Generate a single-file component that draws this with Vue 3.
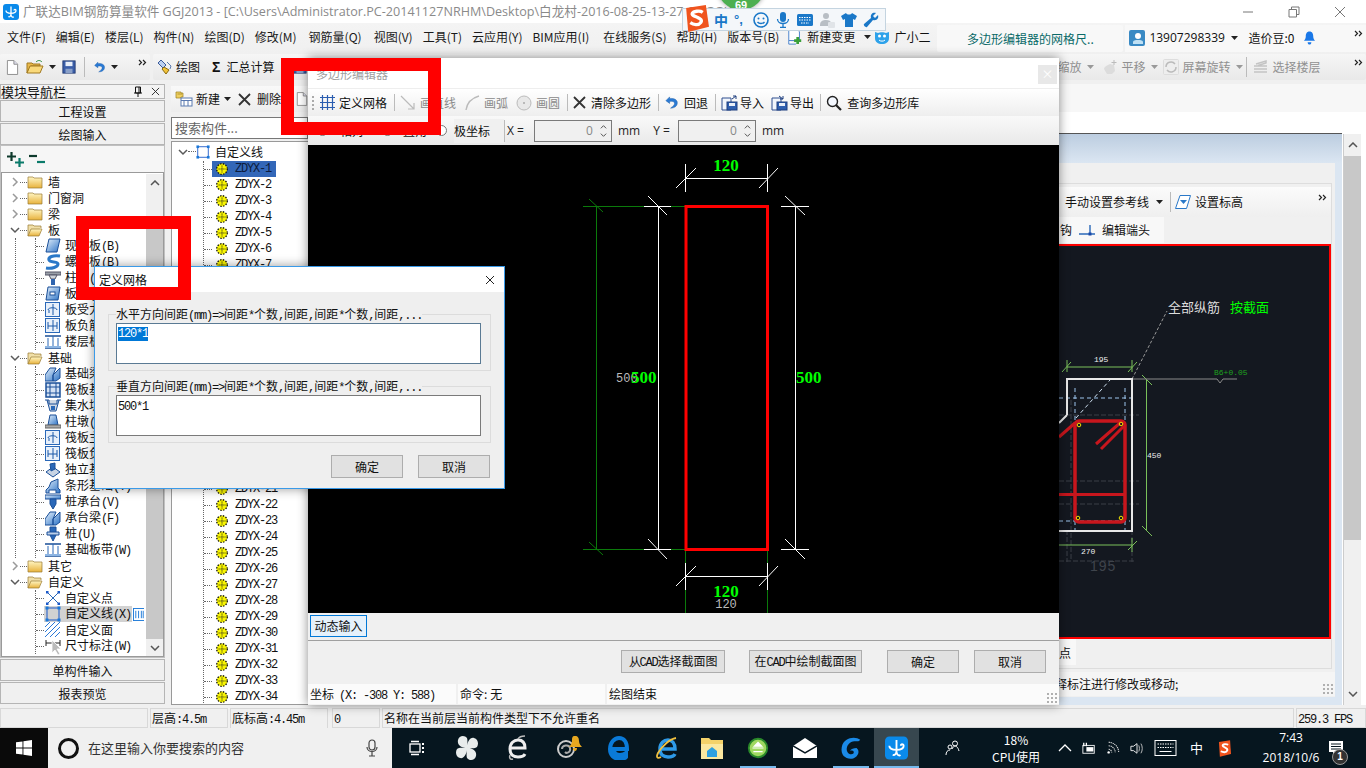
<script setup>
const menus = ['文件(F)','编辑(E)','楼层(L)','构件(N)','绘图(D)','修改(M)','钢筋量(Q)','视图(V)','工具(T)','云应用(Y)','BIM应用(I)','在线服务(S)','帮助(H)','版本号(B)']
const K = (t, i, sel) => ({ t, i, sel })
const leftTree = [
  { t: '墙' }, { t: '门窗洞' }, { t: '梁' },
  { t: '板', open: true, kids: [K('现浇板(B)','slab'),K('螺旋板(B)','spiral'),K('柱帽(V)','cap'),K('板洞(N)','board'),K('板受力筋(S)','bar1'),K('板负筋(F)','bar2'),K('楼层板带(H)','band')] },
  { t: '基础', open: true, kids: [K('基础梁(F)','fbeam'),K('筏板基础(M)','raft'),K('集水坑(K)','pit'),K('柱墩(Y)','pier'),K('筏板主筋(R)','bar1'),K('筏板负筋(X)','bar2'),K('独立基础(P)','iso'),K('条形基础(T)','strip'),K('桩承台(V)','pilecap'),K('承台梁(F)','fbeam'),K('桩(U)','pile'),K('基础板带(W)','band')] },
  { t: '其它' },
  { t: '自定义', open: true, last: true, kids: [K('自定义点','xpt'),K('自定义线(X)','square',true),K('自定义面','hatch'),K('尺寸标注(W)','dim')] }
]
const zdyx = Array.from({ length: 34 }, (_, i) => 'ZDYX-' + (i + 1))
const segs = (s) => (s.match(/[\x20-\x7e]+|[^\x20-\x7e]+/g) || []).map((t) => ({ t, a: /^[\x20-\x7e]/.test(t) }))
const gridLegendH = '水平方向间距(mm)=>间距*个数,间距,间距*个数,间距,...'
const gridLegendV = '垂直方向间距(mm)=>间距*个数,间距,间距*个数,间距,...'
const sogou = ['sg-smile','sg-mic','sg-kbd','sg-user','sg-shirt','sg-wrench']
const taskIcons = [
  { i: 'tk-view', w: 49 }, { i: 'tk-fan', w: 51 }, { i: 'tk-e', w: 51 }, { i: 'tk-swirl', w: 51 },
  { i: 'tk-edge', w: 50 }, { i: 'tk-ie', w: 45 }, { i: 'tk-folder', w: 46 },
  { i: 'tk-green', w: 46, u: 1 }, { i: 'tk-mail', w: 47 }, { i: 'tk-g', w: 46, u: 1 }, { i: 'glodon', w: 45, u: 1, on: 1 }
]
const trayIcons = ['tr-caret','tr-batt','tr-wifi','tr-spk','tr-kbd']
</script>

<template>
  <div class="screen">
    <!-- icon sprite -->
    <svg class="sprite" width="0" height="0">
      <defs>
        <linearGradient id="gFolder" x1="0" y1="0" x2="0" y2="1"><stop offset="0" stop-color="#fff6c4"/><stop offset="1" stop-color="#e8b23c"/></linearGradient>
        <linearGradient id="gBlue" x1="0" y1="0" x2="1" y2="1"><stop offset="0" stop-color="#e4f0fb"/><stop offset="1" stop-color="#2f74c6"/></linearGradient>
      </defs>
      <symbol id="glodon" viewBox="0 0 16 16"><rect width="16" height="16" rx="3" fill="#0a8aea"/><path d="M8 2.500V10c0 2-1.500 3.500-2.600 2.600M3 6.500c0 2 2 2.800 5 2.800s5-.8 5-2.800c0-1.500-2-1.500-2 0M8 10.500c0 2 1.500 3.300 2.800 2.300" fill="none" stroke="#fff" stroke-width="1.300"/></symbol>
      <symbol id="doc" viewBox="0 0 14 16"><path d="M1.500 .5h7l4 4v11h-11z" fill="#fff" stroke="#8a8a8a"/><path d="M8.500 .5v4h4" fill="#dde" stroke="#8a8a8a"/></symbol>
      <symbol id="open-tb" viewBox="0 0 18 16"><path d="M1 14V4h5l1 1h7v2H5z" fill="#e8b84a" stroke="#a07820"/><path d="M1 14l3-7h13l-3 7z" fill="#f9d97a" stroke="#a07820"/><path d="M10 3c2-2 4-2 6 0" fill="none" stroke="#2b8a3e"/></symbol>
      <symbol id="save" viewBox="0 0 16 16"><rect x="1" y="1" width="14" height="14" fill="#3b5ea8" stroke="#223a70"/><rect x="4" y="2" width="8" height="5" fill="#e8eef8"/><rect x="4" y="10" width="8" height="5" fill="#8aa0c8"/></symbol>
      <symbol id="undo" viewBox="0 0 16 16"><path d="M6 2L2 6l4 3V7c4-1 6 1 5 3s-3 3-4 4c5 0 8-3 7-7-1-3-5-4-8-3z" fill="#2a7ad4" stroke="#1a5ca8" stroke-width=".5"/></symbol>
      <symbol id="brush" viewBox="0 0 16 16"><path d="M1 4l3-3 5 5-3 3z" fill="#bcd0f0" stroke="#3a5a9a"/><path d="M7 8l5 3-3 4-4-5z" fill="#f2c33a" stroke="#8a6a10"/><path d="M10 3l4 4-1 3" fill="none" stroke="#5a7ab0"/></symbol>
      <symbol id="pin" viewBox="0 0 10 12"><path d="M2.500 1h5v6h-5zM6 1v6M1 7h8M5 7v4" fill="none" stroke="#111"/></symbol>
      <symbol id="close-thin" viewBox="0 0 10 10"><path d="M1 1l8 8M9 1l-8 8" stroke="#222" fill="none"/></symbol>
      <symbol id="newc" viewBox="0 0 18 16"><path d="M1 1h5v1h2v4H6v1H1z M2.500 3H7" fill="#f0d060" stroke="#9a8020" stroke-width=".7"/><rect x="6" y="7" width="11" height="8" fill="#fff" stroke="#5a7ab0"/><path d="M6 9.500h11M9 9.500V15M13 9.500V15" stroke="#5a7ab0" fill="none"/></symbol>
      <symbol id="x-big" viewBox="0 0 13 13"><path d="M1 1l11 11M12 1L1 12" stroke="#333" stroke-width="1.800" fill="none"/></symbol>
      <symbol id="plusplus" viewBox="0 0 17 15"><path d="M4.500 0v9M0 4.500h9" stroke="#0e3a2c" stroke-width="2.200" fill="none"/><path d="M12.500 6v9M8 10.500h9" stroke="#0a7a6a" stroke-width="2.200" fill="none"/></symbol>
      <symbol id="minusminus" viewBox="0 0 16 15"><path d="M0 4h8" stroke="#0e3a2c" stroke-width="2.200"/><path d="M8 10h8" stroke="#0a7a6a" stroke-width="2.200"/></symbol>
      <symbol id="chev-r" viewBox="0 0 10 10"><path d="M3 1l4 4-4 4" fill="none" stroke="#9a9a9a" stroke-width="1.500"/></symbol>
      <symbol id="chev-d" viewBox="0 0 10 10"><path d="M1 3l4 4 4-4" fill="none" stroke="#5a5a5a" stroke-width="1.500"/></symbol>
      <symbol id="folder" viewBox="0 0 16 14"><path d="M1 2h5l1 1h8v10H1z" fill="url(#gFolder)" stroke="#9a7a30" stroke-width=".7"/></symbol>
      <symbol id="folder-open" viewBox="0 0 16 14"><path d="M1 13V2h5l1 1h7v2" fill="#f0dfa8" stroke="#9a7a30" stroke-width=".7"/><path d="M1 13l3-7h11l-3 7z" fill="url(#gFolder)" stroke="#9a7a30" stroke-width=".7"/></symbol>
      <symbol id="slab" viewBox="0 0 16 16"><path d="M4 1h11l-3 13H1z" fill="url(#gBlue)" stroke="#1a4f98"/></symbol>
      <symbol id="spiral" viewBox="0 0 16 16"><path d="M15 2C8 1 3 3 4 6s9 1 9 4-6 5-12 4" fill="none" stroke="#2a78c8" stroke-width="3"/></symbol>
      <symbol id="cap" viewBox="0 0 16 16"><path d="M0 2h16v3H0z" fill="#9aa0a8" stroke="#556"/><path d="M4 5h8l-2 4H6z" fill="#cfd4da" stroke="#556"/><path d="M6 9h4v6H6z" fill="#2f64ae"/></symbol>
      <symbol id="board" viewBox="0 0 16 16"><path d="M3 1h12l-2 13H1z" fill="url(#gBlue)" stroke="#1a4f98"/><rect x="5" y="6" width="5" height="3" fill="#fff" stroke="#1a4f98"/></symbol>
      <symbol id="bar1" viewBox="0 0 16 16"><rect x=".5" y=".5" width="14" height="14" fill="#e8f0fa" stroke="#2a68b8"/><path d="M8 2v11M3 8c0-3 9-3 9 0M4 8v3" fill="none" stroke="#1a58a8"/></symbol>
      <symbol id="bar2" viewBox="0 0 16 16"><rect x=".5" y=".5" width="14" height="14" fill="#e8f0fa" stroke="#2a68b8"/><path d="M8 2v11M3 4v4h9V4M3 8v3M12 8v3" fill="none" stroke="#1a58a8"/></symbol>
      <symbol id="band" viewBox="0 0 16 16"><path d="M0 2h16M0 14h16" stroke="#1a4f98" stroke-width="1.500"/><path d="M3 4v9M8 2v12M13 4v9" stroke="#2a68b8" fill="none"/><rect y="12" width="16" height="2" fill="#8cb4e2"/></symbol>
      <symbol id="fbeam" viewBox="0 0 16 16"><path d="M0 15V9l5-7h6L8 9v6zM8 15V9l7-7v10l-4 3z" fill="url(#gBlue)" stroke="#1a4f98"/></symbol>
      <symbol id="raft" viewBox="0 0 16 16"><rect x="1" y="1" width="14" height="14" fill="#d4e2f4" stroke="#1a4f98" stroke-width="1.500"/><path d="M1 5h14M1 11h14M5 1v14M11 1v14" stroke="#1a4f98" fill="none"/></symbol>
      <symbol id="pit" viewBox="0 0 16 16"><path d="M0 2h4v4h8V2h4M2 2l3 11h6l3-11" fill="#cfd8e4" stroke="#1a4f98"/><path d="M6 8h4v4H6z" fill="#2a68b8"/></symbol>
      <symbol id="pier" viewBox="0 0 16 16"><path d="M5 1h6l2 10H3z" fill="url(#gBlue)" stroke="#1a4f98"/><rect y="11" width="16" height="3" fill="#aaa" stroke="#666"/></symbol>
      <symbol id="iso" viewBox="0 0 16 16"><path d="M1 10l7-5 7 5-7 5z" fill="#c8d4e4" stroke="#1a4f98"/><path d="M5 2l5-1v6L6 9z" fill="#2a68b8" stroke="#1a4f98"/></symbol>
      <symbol id="strip" viewBox="0 0 16 16"><path d="M1 15v-3l3-3 2-5 7-3v9l2 2v3z" fill="url(#gBlue)" stroke="#1a4f98"/><path d="M4 15v-3h7v3" fill="#fff" stroke="#1a4f98"/></symbol>
      <symbol id="pilecap" viewBox="0 0 16 16"><path d="M0 1h16v4H0z" fill="url(#gBlue)" stroke="#1a4f98"/><path d="M5 5h6v5l-3 5-3-5z" fill="#2a68b8" stroke="#1a4f98"/></symbol>
      <symbol id="pile" viewBox="0 0 16 16"><path d="M5 1h6v8l-3 6-3-6z" fill="#2a68b8" stroke="#1a4f98"/><path d="M2 6h12v3H2z" fill="#bcd0ea" stroke="#1a4f98"/></symbol>
      <symbol id="xpt" viewBox="0 0 16 16"><path d="M3 3l10 10M13 3L3 13" stroke="#2a68b8" fill="none"/><rect x="1" y="1" width="2.500" height="2.500" fill="#1a58c8"/><rect x="12.500" y="1" width="2.500" height="2.500" fill="#1a58c8"/><rect x="1" y="12.500" width="2.500" height="2.500" fill="#1a58c8"/><rect x="12.500" y="12.500" width="2.500" height="2.500" fill="#1a58c8"/></symbol>
      <symbol id="square" viewBox="0 0 16 16"><rect x="2" y="2" width="12" height="12" fill="none" stroke="#1a58c8"/><rect x=".5" y=".5" width="3" height="3" fill="#1a78d8"/><rect x="12.500" y=".5" width="3" height="3" fill="#1a78d8"/><rect x=".5" y="12.500" width="3" height="3" fill="#1a78d8"/><rect x="12.500" y="12.500" width="3" height="3" fill="#1a78d8"/></symbol>
      <symbol id="hatch" viewBox="0 0 16 16"><path d="M0 5l5-5M0 10L10 0M0 15L15 0M5 15L15 5M10 15l5-5" stroke="#2a78d8" fill="none"/></symbol>
      <symbol id="dim" viewBox="0 0 16 16"><path d="M1 2v6M15 2v6M1 5h14" stroke="#222" fill="none"/></symbol>
      <symbol id="cols" viewBox="0 0 14 14"><rect x=".5" y=".5" width="13" height="13" fill="#fff" stroke="#1a78d8"/><path d="M3 3v8M6 3v8M9 3v8M11 3v8" stroke="#1a78d8" fill="none"/></symbol>
      <symbol id="gear" viewBox="0 0 12 12"><circle cx="6" cy="6" r="5.400" fill="#f8f400"/><circle cx="6" cy="6" r="5.300" fill="none" stroke="#111" stroke-width="1.300" stroke-dasharray="1.400 1.400"/><path d="M2.500 6h7M6 2.500v7" stroke="#222" stroke-width=".9" stroke-dasharray="1.200 .8"/></symbol>
      <symbol id="grid" viewBox="0 0 15 15"><path d="M0 2.500h15M0 7.500h15M0 12.500h15M2.500 0v15M7.500 0v15M12.500 0v15" stroke="#2a5db0" fill="none" stroke-width="1.200"/></symbol>
      <symbol id="line-d" viewBox="0 0 16 16"><path d="M1 1l13 13M8 14h6V8" stroke="#bbb" stroke-width="1.200" fill="none"/></symbol>
      <symbol id="arc" viewBox="0 0 16 16"><path d="M2 15C3 8 8 3 15 1" fill="none" stroke="#bbb" stroke-width="1.400"/></symbol>
      <symbol id="circ" viewBox="0 0 16 16"><circle cx="8" cy="8" r="7" fill="#e8e8e8" stroke="#bbb"/><circle cx="8" cy="8" r="1" fill="#aaa"/></symbol>
      <symbol id="imp" viewBox="0 0 18 16"><path d="M1 3h9v12H1z" fill="#f2f6fc" stroke="#2f4f8f"/><rect x="6" y="7" width="10" height="8" fill="#2f5faf" stroke="#1f3f7f"/><rect x="8" y="8" width="6" height="3" fill="#e8eef8"/><path d="M15 1l-4 3M12 1h3v3" stroke="#1f3f7f" fill="none"/></symbol>
      <symbol id="exp" viewBox="0 0 18 16"><path d="M1 3h9v12H1z" fill="#f2f6fc" stroke="#2f4f8f"/><rect x="6" y="7" width="10" height="8" fill="#2f5faf" stroke="#1f3f7f"/><rect x="8" y="8" width="6" height="3" fill="#e8eef8"/><path d="M8 1l4 3M12 1v3H9" stroke="#1f3f7f" fill="none"/></symbol>
      <symbol id="mag" viewBox="0 0 16 16"><circle cx="6.500" cy="6.500" r="5" fill="#f4f8ff" stroke="#222" stroke-width="1.400"/><path d="M10 10l5 5" stroke="#222" stroke-width="2.200"/></symbol>
      <symbol id="doc-plus" viewBox="0 0 18 20"><path d="M2 1h9l3 3v10H2z M2 14v4h8" fill="#fff" stroke="#3a78c8"/><path d="M12 10v8M8 14h8" stroke="#3aa03a" stroke-width="3"/></symbol>
      <symbol id="monster" viewBox="0 0 16 16"><path d="M1 3l3 1c2-1 6-1 8 0l3-1v6c0 4-3 6-7 6s-7-2-7-6z" fill="#2ea2ea"/><circle cx="5.500" cy="7" r="1.500" fill="#fff"/><circle cx="10.500" cy="7" r="1.500" fill="#fff"/><path d="M5 11c1 1.500 5 1.500 6 0" stroke="#fff" fill="none"/></symbol>
      <symbol id="user-tile" viewBox="0 0 16 16"><rect width="16" height="16" rx="2" fill="#3a8ac4"/><circle cx="9" cy="6" r="3" fill="#fff"/><path d="M4 14v-2c0-1.500 2-2 5-2s5 .5 5 2v2z" fill="#bfe0f4"/></symbol>
      <symbol id="bell" viewBox="0 0 14 16"><path d="M7 1c3 0 4 2.500 4 5s1 4 2 5H1c1-1 2-2.500 2-5s1-5 4-5zM5 12.500h4c0 1.500-1 2.500-2 2.500s-2-1-2-2.500z" fill="#1a78e8"/></symbol>
      <symbol id="hand" viewBox="0 0 16 16"><path d="M2 10c0-2 2-3 4-4l2-1 4 1 1 6-3 3H5z" fill="#dcdcdc"/><path d="M12 1v5M9.500 3.500h5" stroke="#bbb" fill="none"/></symbol>
      <symbol id="rot" viewBox="0 0 16 16"><rect x=".5" y=".5" width="15" height="15" rx="1" fill="#eee" stroke="#ddd"/><path d="M3 8a5 5 0 0 1 9-3M13 8a5 5 0 0 1-9 3" stroke="#bbb" fill="none" stroke-width="1.500"/></symbol>
      <symbol id="layers" viewBox="0 0 16 16"><path d="M3 5L13 2v2L5 6.500M1 7h13M1 10h13M1 13h13" stroke="#c4c4c4" stroke-width="1.500" fill="none"/></symbol>
      <symbol id="dimline" viewBox="0 0 16 16"><path d="M0 12h16M11 3v9" stroke="#2a68b8" stroke-width="1.400"/><rect x="9.500" y="10.500" width="3" height="3" fill="#1a48a8"/></symbol>
      <symbol id="elev" viewBox="0 0 16 16"><path d="M5 1.500h10.500l-4 13H.5z" fill="#fff" stroke="#2a78c8"/><path d="M5 6h7l-3.500 4z" fill="#2a78c8"/></symbol>
      <symbol id="caret" viewBox="0 0 7 4"><path d="M0 0h7L3.500 4z" fill="#222"/></symbol>
      <symbol id="caret-g" viewBox="0 0 7 4"><path d="M0 0h7L3.500 4z" fill="#999"/></symbol>
      <symbol id="chev2" viewBox="0 0 9 7"><path d="M1 1l2.500 2.500L1 6M5 1l2.500 2.500L5 6" fill="none" stroke="#222" stroke-width="1.200"/></symbol>
      <symbol id="arrow-up" viewBox="0 0 10 6"><path d="M1 5l4-4 4 4" fill="none" stroke="#555" stroke-width="1.500"/></symbol>
      <symbol id="arrow-down" viewBox="0 0 10 6"><path d="M1 1l4 4 4-4" fill="none" stroke="#555" stroke-width="1.500"/></symbol>
      <symbol id="sg-s" viewBox="0 0 25 26"><path d="M3 3l19-3 3 21-20 5z" fill="#f0541e"/><path d="M19 7c-3-2-9-1-10 1s3 3 5 4 5 2 3 5-7 2-10 0" fill="none" stroke="#fff" stroke-width="3.200"/></symbol>
      <symbol id="sg-smile" viewBox="0 0 16 16"><circle cx="8" cy="8" r="7" fill="none" stroke="#1a78c8" stroke-width="1.600"/><circle cx="5.500" cy="6.500" r="1" fill="#1a78c8"/><circle cx="10.500" cy="6.500" r="1" fill="#1a78c8"/><path d="M4.500 10c1.500 2 5.500 2 7 0" stroke="#1a78c8" fill="none" stroke-width="1.300"/></symbol>
      <symbol id="sg-mic" viewBox="0 0 16 16"><rect x="5" y="0" width="6" height="10" rx="3" fill="#1a78c8"/><path d="M2.500 7c0 6 11 6 11 0M8 12v4M5 15.500h6" stroke="#1a78c8" fill="none" stroke-width="1.300"/></symbol>
      <symbol id="sg-kbd" viewBox="0 0 16 16"><rect y="2" width="16" height="12" rx="1.500" fill="#1a78c8"/><path d="M2 5.500h12M2 8h12M4 11h8" stroke="#fff" stroke-dasharray="1.500 1" fill="none"/></symbol>
      <symbol id="sg-user" viewBox="0 0 16 16"><circle cx="7" cy="4" r="3" fill="#b8bec4"/><path d="M1 13c0-4 3-5 6-5s5 1 5 3v3H1z" fill="#b8bec4"/><rect x="9" y="10" width="7" height="6" rx="1" fill="#e0e4e8"/></symbol>
      <symbol id="sg-shirt" viewBox="0 0 16 16"><path d="M5 1L0 4l2 4 2-1v8h8V7l2 1 2-4-5-3c-1 2-5 2-6 0z" fill="#1a78c8"/></symbol>
      <symbol id="sg-wrench" viewBox="0 0 16 16"><path d="M15 3l-3 3-2-2 3-3c-3-1-6 1-5 5L1 12c-1 1 2 4 3 3l6-7c4 1 6-2 5-5z" fill="#1a78c8"/></symbol>
      <symbol id="win" viewBox="0 0 16 16"><path d="M0 2.300L6.500 1.400V7.500H0zM7.400 1.300L16 0V7.500H7.400zM0 8.400H6.500V14.600L0 13.700zM7.400 8.400H16V16L7.400 14.700z" fill="#fff"/></symbol>
      <symbol id="mic-d" viewBox="0 0 16 18"><rect x="5" y="1" width="6" height="10" rx="3" fill="none" stroke="#444" stroke-width="1.200"/><path d="M3 8c0 6 10 6 10 0M8 13v4M5 17h6" stroke="#444" fill="none" stroke-width="1.200"/></symbol>
      <symbol id="tk-view" viewBox="0 0 16 16"><rect x="1" y="4" width="10" height="8" fill="none" stroke="#fff" stroke-width="1.300"/><path d="M2 1.500h8M2 14.500h8" stroke="#fff" stroke-width="1.300"/><rect x="13" y="3" width="2" height="2" fill="#fff"/><rect x="13" y="7" width="2" height="2" fill="#fff"/><rect x="13" y="11" width="2" height="2" fill="#fff"/></symbol>
      <symbol id="tk-fan" viewBox="0 0 22 26"><path d="M11 13C5 13 1 10 2 5s7-5 9-2c1 3 0 7 0 10zM11 13c0-6 3-11 7-10s5 6 3 9c-2 2-7 1-10 1zM11 13c6 0 10 3 9 8s-7 5-9 2c-1-3 0-7 0-10zM11 13c0 6-3 11-7 10s-5-6-3-9c2-2 7-1 10-1z" fill="#e8ecec"/></symbol>
      <symbol id="tk-e" viewBox="0 0 22 26"><path d="M4 13h14c0-6-3-8-7-8s-8 3-8 9 4 8 8 8 6-1 7-3" fill="none" stroke="#eee" stroke-width="3"/><path d="M18 1c-3 0-6 1-7 3M3 20c-1 3 0 5 3 4" fill="none" stroke="#bbb" stroke-width="1.500"/></symbol>
      <symbol id="tk-swirl" viewBox="0 0 28 24"><circle cx="11" cy="13" r="8" fill="none" stroke="#ccc" stroke-width="2"/><path d="M7 13c0-4 7-5 8-1s-3 6-5 4" fill="none" stroke="#aaa" stroke-width="2"/><path d="M20 0c3 0 4 2 4 5s2 5 3 6H14c1-1 3-3 3-6s0-5 3-5zM18 12h4c0 2-1 3-2 3s-2-1-2-3z" fill="#e8a820"/></symbol>
      <symbol id="tk-edge" viewBox="0 0 22 24"><path d="M4 13h15c0-7-3-11-8-11S2 7 2 13s4 10 10 10c3 0 5-1 6-2v-4c-2 2-4 2-6 2-4 0-6-2-6-5" fill="none" stroke="#0a7ad8" stroke-width="4"/></symbol>
      <symbol id="tk-ie" viewBox="0 0 24 24"><path d="M6 13h14c0-6-3-9-7-9s-8 3-8 9 4 8 8 8 6-1 7-3" fill="none" stroke="#2e9ae8" stroke-width="3.500"/><path d="M21 2c-6 1-14 8-18 15-2 4-1 6 3 4" fill="none" stroke="#f0c040" stroke-width="1.800"/></symbol>
      <symbol id="tk-folder" viewBox="0 0 22 22"><path d="M0 1h8l2 2h12v19H0z" fill="#f4d26a"/><rect y="7" width="22" height="15" fill="#fbe8a0"/><path d="M6 14l5-4 5 4v6H6z" fill="#2ea0e0"/></symbol>
      <symbol id="tk-green" viewBox="0 0 24 26"><circle cx="12" cy="13" r="10" fill="#9fd860" stroke="#2a8a2a" stroke-width="2"/><path d="M6 13h12M7 17h10M12 7L8 11h8z" fill="#fff" stroke="#fff" stroke-width="1.300"/></symbol>
      <symbol id="tk-mail" viewBox="0 0 24 20"><path d="M0 8L12 0l12 8v12H0z" fill="#fff"/><path d="M0 8l12 7 12-7" fill="none" stroke="#06161f" stroke-width="1.500"/></symbol>
      <symbol id="tk-g" viewBox="0 0 24 26"><path d="M22 4C17 0 4 1 2 12s7 14 13 12c5-2 7-8 3-11-3 0-6 1-7 3 3-1 4 0 4 2s-5 3-7-1 1-10 6-11 6 1 8-2z" fill="#1a8ae8"/></symbol>
      <symbol id="tr-caret" viewBox="0 0 14 14"><path d="M1 10l6-6 6 6" fill="none" stroke="#fff" stroke-width="1.300"/></symbol>
      <symbol id="tr-batt" viewBox="0 0 16 16"><rect x="1" y="5" width="13" height="9" fill="none" stroke="#fff"/><rect x="5" y="7" width="8" height="5" fill="#fff"/><path d="M2 2v4M5 2v4" stroke="#fff" stroke-width="1.500"/></symbol>
      <symbol id="tr-wifi" viewBox="0 0 16 16"><path d="M3 1.500A11.500 11.500 0 0 1 14.500 13M3 5.500A7.500 7.500 0 0 1 10.500 13M3 9.500A3.500 3.500 0 0 1 6.500 13" fill="none" stroke="#ddd" stroke-dasharray="1.500 .8" stroke-width="1.200"/><circle cx="3" cy="13" r="1.400" fill="#fff"/></symbol>
      <symbol id="tr-spk" viewBox="0 0 16 16"><path d="M1 6h3l4-3v11l-4-3H1z" fill="none" stroke="#fff"/><path d="M10 5c1 2 1 5 0 7M12.500 3c2 3 2 8 0 11" fill="none" stroke="#ccc"/></symbol>
      <symbol id="tr-kbd" viewBox="0 0 22 16"><rect x=".5" y=".5" width="21" height="15" fill="none" stroke="#fff"/><path d="M3 4h16M3 7.500h16" stroke="#fff" stroke-dasharray="1.500 1" fill="none"/><path d="M5 11.500h12" stroke="#fff"/></symbol>
      <symbol id="tr-s" viewBox="0 0 14 18"><path d="M1 2l12-2 1 15-12 3z" fill="#f0541e"/><path d="M11 5c-2-1-6-1-6 1s6 2 5 5-5 2-7 1" fill="none" stroke="#fff" stroke-width="2"/></symbol>
      <symbol id="notif" viewBox="0 0 16 16"><path d="M1 1h14v11H8l-3 3v-3H1z" fill="#fff"/><path d="M3 4h10M3 6.500h10M3 9h10" stroke="#06161f"/></symbol>
      <symbol id="cursor" viewBox="0 0 12 16"><path d="M1 0v13l3-3 3 5 2-1-3-5h4z" fill="#bbb" stroke="#fff" stroke-width=".8"/></symbol>
    </svg>

    <!-- main program -->
    <header class="titlebar">
      <svg class="ic16 ti-app"><use href="#glodon"/></svg>
      <span class="ti-text">广联达BIM钢筋算量软件 GGJ2013 - [C:\Users\Administrator.PC-20141127NRHM\Desktop\白龙村-2016-08-25-13-27-00.GGJ12]</span>
      <div class="win-ctrls">
        <svg class="wc" viewBox="0 0 12 12"><path d="M1 6h10" stroke="#777" fill="none"/></svg>
        <svg class="wc" viewBox="0 0 12 12"><path d="M1 3.500h7.500V11H1zM3.500 3.500V1H11v7.500H8.500" stroke="#777" fill="none"/></svg>
        <svg class="wc" viewBox="0 0 12 12"><path d="M1 1l10 10M11 1L1 11" stroke="#777" fill="none"/></svg>
      </div>
    </header>

    <nav class="menubar">
      <span v-for="(m, i) in menus" :key="m" class="menu" :class="{ p2: i === 6 || i === 7, p4: i === 11 }">{{ m }}</span>
      <span class="menu-ic m-change"><svg class="ic-doc"><use href="#doc-plus"/></svg>新建变更<svg class="caret"><use href="#caret"/></svg></span>
      <span class="menu-ic m-mon"><svg class="ic16"><use href="#monster"/></svg>广小二</span>
      <span class="m-tab">多边形编辑器的网格尺..</span>
      <span class="m-user"><svg class="ic16"><use href="#user-tile"/></svg><span class="u-num">13907298339</span><svg class="caret"><use href="#caret"/></svg><span class="u-bean">造价豆:0</span><svg class="ic-bell"><use href="#bell"/></svg><svg class="chev2 u-ch"><use href="#chev2"/></svg></span>
    </nav>

    <div class="toolrow">
      <div class="tb-group g1">
        <svg class="ic-docn"><use href="#doc"/></svg>
        <svg class="ic-open"><use href="#open-tb"/></svg>
        <svg class="caret"><use href="#caret"/></svg>
        <svg class="ic-sv"><use href="#save"/></svg>
        <i class="tb-sep"></i>
        <svg class="ic-un"><use href="#undo"/></svg>
        <svg class="caret"><use href="#caret"/></svg>
        <svg class="chev2 tb-more"><use href="#chev2"/></svg>
      </div>
      <div class="tb-group g2">
        <span class="tbi"><svg class="ic16"><use href="#brush"/></svg>绘图</span>
        <span class="tbi tb-sum"><b class="sigma">Σ</b>汇总计算</span>
        <svg class="ic-blue"><use href="#save"/></svg>
        <span class="g2-gap"></span>
        <span class="tbi dis t-zoom">缩放<svg class="caret"><use href="#caret-g"/></svg></span>
        <span class="tbi dis"><svg class="ic16"><use href="#hand"/></svg>平移<svg class="caret"><use href="#caret-g"/></svg></span>
        <span class="tbi dis"><svg class="ic16"><use href="#rot"/></svg>屏幕旋转<svg class="caret"><use href="#caret-g"/></svg></span>
        <i class="tb-sep"></i>
        <span class="tbi dis"><svg class="ic16"><use href="#layers"/></svg>选择楼层</span>
        <svg class="chev2 tb-more2"><use href="#chev2"/></svg>
      </div>
    </div>

    <main class="body">
      <!-- module navigation -->
      <aside class="nav">
        <div class="nav-title"><span>模块导航栏</span><svg class="ic-pin"><use href="#pin"/></svg><svg class="ic-x"><use href="#close-thin"/></svg></div>
        <div class="nav-btn">工程设置</div>
        <div class="nav-btn">绘图输入</div>
        <div class="nav-tree">
          <div class="nt-tools"><svg class="ic-pp"><use href="#plusplus"/></svg><svg class="ic-mm"><use href="#minusminus"/></svg></div>
          <div class="nt-body">
            <div class="nt-list">
              <template v-for="g in leftTree" :key="g.t">
                <div class="nt-row">
                  <svg class="chev"><use :href="g.open ? '#chev-d' : '#chev-r'"/></svg>
                  <i class="dash d1"></i>
                  <svg class="ic-fold"><use :href="g.open ? '#folder-open' : '#folder'"/></svg>
                  <span class="nt-t">{{ g.t }}</span>
                </div>
                <div v-if="g.kids" class="kids-o" :class="{ last: g.last }">
                  <div class="kids">
                    <div v-for="k in g.kids" :key="k.t" class="kid">
                      <i class="dash d2"></i>
                      <div class="kid-main" :class="{ sel: k.sel }">
                        <svg class="ic16"><use :href="'#' + k.i"/></svg>
                        <span class="kid-t"><span v-for="(s, n) in segs(k.t)" :key="n" :class="{ a: s.a }">{{ s.t }}</span></span>
                      </div>
                      <svg v-if="k.sel" class="ic-cols"><use href="#cols"/></svg>
                    </div>
                  </div>
                </div>
              </template>
            </div>
            <div class="vs">
              <div class="vs-b"><svg class="arr"><use href="#arrow-up"/></svg></div>
              <div class="vs-track"><div class="vs-thumb"></div></div>
              <div class="vs-b"><svg class="arr"><use href="#arrow-down"/></svg></div>
            </div>
          </div>
        </div>
        <div class="nav-btn">单构件输入</div>
        <div class="nav-btn">报表预览</div>
      </aside>

      <!-- component list -->
      <section class="comp">
        <div class="comp-tools">
          <svg class="ic-new"><use href="#newc"/></svg><span>新建</span><svg class="caret"><use href="#caret"/></svg>
          <svg class="ic-xb"><use href="#x-big"/></svg><span>删除</span>
          <svg class="ic-cp"><use href="#doc"/></svg><span>复制</span>
        </div>
        <div class="comp-search">搜索构件...</div>
        <div class="comp-tree">
          <div class="ct-root">
            <svg class="chev"><use href="#chev-d"/></svg><i class="dash d3"></i>
            <svg class="ic-sq"><use href="#square"/></svg><span class="ct-rt">自定义线</span>
          </div>
          <div class="ct-kids">
            <div v-for="(z, i) in zdyx" :key="z" class="ct-row">
              <i class="dash d4"></i>
              <div class="ct-item" :class="{ sel: i === 0 }"><svg class="ic-gear"><use href="#gear"/></svg><span class="mono">{{ z }}</span></div>
            </div>
          </div>
        </div>
      </section>

      <!-- document behind the editor -->
      <section class="doc">
        <div class="d-strip"></div>
        <div class="d-white"></div>
        <div class="d-inner">
          <div class="d-win">
            <div class="d-title"></div>
            <div class="d-panel">
              <div class="d-frame">
                <div class="d-row1">
                  <span class="dt">手动设置参考线</span><svg class="caret"><use href="#caret"/></svg><i class="tb-sep"></i>
                  <svg class="ic16"><use href="#elev"/></svg><span class="dt d-lev">设置标高</span>
                  <svg class="chev2 d-more"><use href="#chev2"/></svg>
                </div>
                <div class="d-row2">
                  <span class="dt">钩</span><svg class="ic16"><use href="#dimline"/></svg><span class="dt">编辑端头</span>
                </div>
                <div class="d-draw">
                  <svg class="d-svg" viewBox="1050 246 281 391" width="281" height="391">
                    <g fill="none">
                      <path d="M1059 415H1139M1059 481H1139M1059 504H1139M1071 400V560M1132 530V562M1067 530V562M1059 561H1135" stroke="#3a3e46" stroke-dasharray="5 2"/>
                      <path d="M1059 398H1132" stroke="#9cc4ec" stroke-dasharray="4 3"/>
                      <path d="M1059 521H1130" stroke="#9cc4ec" stroke-dasharray="4 3"/>
                      <path d="M1075 388V532M1125 388V532" stroke="#9cc4ec" stroke-dasharray="4 3"/>
                      <path d="M1076 418L1110 380" stroke="#cfe0f0" stroke-dasharray="4 3"/>
                      <path d="M1132 379L1167 311" stroke="#9a9a9a" stroke-dasharray="3 2"/>
                      <path d="M1067 367H1132M1067 360V372M1132 360V372M1062 372L1071 362M1128 372L1137 362M1146.500 379V531M1142 375L1152 385M1142 526L1152 536M1059 545H1132M1132 538V552M1128 550L1137 541" stroke="#7ac05a"/>
                      <path d="M1132 379H1217L1220 383L1223 379H1237" stroke="#8a8a8a"/>
                      <path d="M1067 415V379H1132V531H1059M1067 415L1059 423" stroke="#e8e8e8" stroke-width="2"/>
                      <rect x="1075" y="421" width="50" height="101" rx="4" stroke="#c8161d" stroke-width="3.500"/>
                      <path d="M1120 423L1096 444M1124 426L1101 449M1059 437L1075 423M1059 494.500H1125" stroke="#c8161d" stroke-width="3"/>
                      <g stroke="#f0e000"><circle cx="1079" cy="425" r="1.800"/><circle cx="1121" cy="424" r="1.800"/><circle cx="1078" cy="518" r="1.800"/><circle cx="1121" cy="518" r="1.800"/></g>
                    </g>
                    <text x="1168" y="312" class="cad-t" fill="#ddd">全部纵筋</text>
                    <text x="1230" y="312" class="cad-t" fill="#00ff00">按截面</text>
                    <text x="1094" y="362" class="cad-s" fill="#eee">195</text>
                    <text x="1214" y="375" class="cad-s" fill="#1ea01e">B6+0.05</text>
                    <text x="1147" y="458" class="cad-s" fill="#eee">450</text>
                    <text x="1081" y="554" class="cad-s" fill="#eee">270</text>
                    <text x="1090" y="571" class="cad-g" fill="#3f444c">195</text>
                  </svg>
                </div>
                <div class="d-foot"><span class="dt">点</span></div>
              </div>
              <div class="d-status"><span>释标注进行修改或移动;</span><i class="grip"></i></div>
            </div>
          </div>
          <div class="d-scroll">
            <div class="ds-b"><svg class="arr"><use href="#arrow-up"/></svg></div>
            <div class="ds-thumb"></div>
            <div class="ds-track"></div>
            <div class="ds-b"><svg class="arr"><use href="#arrow-down"/></svg></div>
          </div>
        </div>
      </section>
    </main>

    <footer class="status">
      <span class="st s0"></span>
      <span class="st s1"><span>层高</span><span class="a">:4.5m</span></span>
      <span class="st s2"><span>底标高</span><span class="a">:4.45m</span></span>
      <span class="st s3"><span class="a">0</span></span>
      <span class="st s4">名称在当前层当前构件类型下不允许重名</span>
      <span class="st s5"><span class="a">259.3 FPS</span></span>
    </footer>

    <div class="taskbar">
      <div class="tk-start"><svg class="ic-win"><use href="#win"/></svg></div>
      <div class="tk-search">
        <i class="cortana"></i>
        <span class="tk-q">在这里输入你要搜索的内容</span>
        <svg class="ic-micd"><use href="#mic-d"/></svg>
      </div>
      <div v-for="c in taskIcons" :key="c.i" class="tk-cell" :class="{ on: c.on, u: c.u }" :style="{ width: c.w + 'px' }">
        <svg class="tk-ic" :class="c.i"><use :href="'#' + c.i"/></svg>
      </div>
      <svg class="tk-people" viewBox="0 0 16 16"><circle cx="10" cy="3.500" r="2.500" fill="none" stroke="#fff"/><circle cx="5" cy="7" r="2" fill="none" stroke="#fff"/><path d="M1 15c0-3 1.500-5 4-5M7 9c1-2 2-3 3-3s3 1 4 5" fill="none" stroke="#fff"/></svg>
      <div class="tk-cpu"><span>18%</span><span>CPU使用</span></div>
      <div class="tk-tray">
        <svg v-for="t in trayIcons" :key="t" class="tray" :class="t"><use :href="'#' + t"/></svg>
        <span class="tr-zh">中</span>
        <svg class="tr-s"><use href="#tr-s"/></svg>
      </div>
      <div class="tk-clock"><span>7:43</span><span>2018/10/6</span></div>
      <div class="tk-notif"><svg class="ic16"><use href="#notif"/></svg></div>
    </div>

    <!-- polygon editor window -->
    <div class="editor">
      <div class="ed-title"><span>多边形编辑器</span><span class="ed-close">×</span></div>
      <div class="ed-tb1">
        <i class="ed-grip"></i>
        <span class="et et-first"><svg class="ic15"><use href="#grid"/></svg>定义网格</span><i class="et-sep"></i>
        <span class="et off"><svg class="ic16"><use href="#line-d"/></svg>画直线</span>
        <span class="et off"><svg class="ic16"><use href="#arc"/></svg>画弧</span>
        <span class="et off"><svg class="ic16"><use href="#circ"/></svg>画圆</span><i class="et-sep"></i>
        <span class="et"><svg class="ic-xe"><use href="#x-big"/></svg>清除多边形</span><i class="et-sep"></i>
        <span class="et"><svg class="ic15"><use href="#undo"/></svg>回退</span><i class="et-sep"></i>
        <span class="et et-tight"><svg class="ic-io"><use href="#imp"/></svg>导入</span>
        <span class="et et-tight"><svg class="ic-io"><use href="#exp"/></svg>导出</span><i class="et-sep"></i>
        <span class="et"><svg class="ic16"><use href="#mag"/></svg>查询多边形库</span>
      </div>
      <div class="ed-tb2">
        <i class="radio r1"></i><span class="rl l1">相对</span>
        <i class="radio r2"></i><span class="rl l2">直角</span>
        <i class="radio r3"></i><span class="rl polar">极坐标</span>
        <i class="et-sep s2"></i>
        <span class="lab">X =</span>
        <div class="spin"><span>0</span><div class="spin-a"><svg class="arr-s"><use href="#arrow-up"/></svg><svg class="arr-s"><use href="#arrow-down"/></svg></div></div>
        <span class="lab mm">mm</span>
        <span class="lab ylab">Y =</span>
        <div class="spin"><span>0</span><div class="spin-a"><svg class="arr-s"><use href="#arrow-up"/></svg><svg class="arr-s"><use href="#arrow-down"/></svg></div></div>
        <span class="lab mm">mm</span>
      </div>
      <svg class="canvas" viewBox="308 145 751 468" width="751" height="468">
        <g fill="none" shape-rendering="crispEdges">
          <path d="M583 206H644M671 206H685M583 549H644M671 549H685M596.500 206V549M685.500 549V563M685.500 590V613M767.500 549V563M767.500 590V613" stroke="#0b7a0b"/>
          <path d="M685.500 178H767M685.500 164V192M767.500 164V192M644 206H671M658.500 206V549M644 549H671M781 206H809M795.500 206V549M781 549H809M685.500 576.500H767M685.500 563V590M767.500 563V590" stroke="#fff"/>
        </g>
        <g fill="none">
          <path d="M589 199L603 212M589 542L603 555" stroke="#0b7a0b"/>
          <path d="M676 188L696 168M759 188L778 168M648 196L667 215M648 539L667 559M785 196L805 215M785 539L805 559M676 586L696 566M759 586L778 566" stroke="#fff"/>
          <rect x="686" y="206.500" width="81.500" height="343" stroke="#ff0000" stroke-width="3"/>
        </g>
        <text x="616" y="382" class="cad-grey" fill="#bbb">500</text>
        <text x="726" y="170.500" class="cad-b mid" fill="#00ff00">120</text>
        <text x="631" y="383" class="cad-b" fill="#00ff00">500</text>
        <text x="796" y="383" class="cad-b" fill="#00ff00">500</text>
        <text x="726" y="596.500" class="cad-b mid" fill="#00ff00">120</text>
        <text x="726" y="608" class="cad-grey mid" fill="#bbb">120</text>
      </svg>
      <div class="ed-dyn"><button class="dyn-btn">动态输入</button></div>
      <div class="ed-actions">
        <button class="ebtn w-a"><span class="a2">从CAD</span>选择截面图</button>
        <button class="ebtn w-b">在<span class="a2">CAD</span>中绘制截面图</button>
        <button class="ebtn w-c">确定</button>
        <button class="ebtn w-c">取消</button>
      </div>
      <div class="ed-status">
        <span class="es es1"><span>坐标</span><span class="a">(X: -308 Y: 588)</span></span>
        <span class="es es2"><span>命令:</span><span>无</span></span>
        <span class="es es3">绘图结束</span>
        <i class="grip"></i>
      </div>
    </div>

    <!-- define grid dialog -->
    <div class="dialog">
      <div class="dl-title"><span>定义网格</span><svg class="dl-x"><use href="#close-thin"/></svg></div>
      <div class="dl-body">
        <fieldset class="fs">
          <legend><span v-for="(s, n) in segs(gridLegendH)" :key="n" :class="{ a: s.a }">{{ s.t }}</span></legend>
          <div class="ta focus"><span class="pick a">120*1</span></div>
        </fieldset>
        <fieldset class="fs">
          <legend><span v-for="(s, n) in segs(gridLegendV)" :key="n" :class="{ a: s.a }">{{ s.t }}</span></legend>
          <div class="ta"><span class="a">500*1</span></div>
        </fieldset>
        <div class="dl-actions"><button class="ebtn w-d">确定</button><button class="ebtn w-d">取消</button></div>
      </div>
    </div>

    <!-- overlays -->
    <div class="ball"><span>69</span></div>
    <div class="sogou">
      <svg class="sg-logo"><use href="#sg-s"/></svg>
      <span class="sg-zh">中</span>
      <span class="sg-pt">°,</span>
      <svg v-for="s in sogou" :key="s" class="sg-ic"><use :href="'#' + s"/></svg>
    </div>
    <svg class="cursor"><use href="#cursor"/></svg>
    <div class="tk-badge">1</div>
    <div class="mark m1"></div>
    <div class="mark m2"></div>
  </div>
</template>

<style>
html, body { margin: 0; padding: 0; background: #f0f0f0; }
</style>

<style scoped>
.screen { width: 1366px; height: 768px; position: relative; overflow: hidden; display: flex; flex-direction: column; background: #f0f0f0; color: #111; font: 12px/16px "Noto Sans CJK SC", "Noto Sans", sans-serif; }
.sprite { display: block; }
svg { flex: none; display: block; }
.a { font-family: "Liberation Mono", monospace; letter-spacing: -1.2px; }
.ic16 { width: 16px; height: 16px; }
.ic15 { width: 15px; height: 15px; }
.caret { width: 7px; height: 4px; }
.chev2 { width: 9px; height: 7px; }

.titlebar { height: 23px; background: #fff; display: flex; align-items: center; padding-left: 3px; flex: none; }
.ti-app { margin-right: 4px; }
.ti-text { color: #8a8a8a; font-size: 12.600px; font-family: "Open Sans", "Noto Sans CJK SC", sans-serif; white-space: nowrap; flex: 1; overflow: hidden; }
.win-ctrls { display: flex; gap: 34px; padding-right: 20px; padding-left: 30px; }
.wc { width: 12px; height: 12px; }

.menubar { height: 31px; flex: none; background: linear-gradient(#f4f4f4, #f0f0f0); display: flex; align-items: center; padding-left: 7px; gap: 10px; position: relative; padding-bottom: 3px; box-sizing: border-box; white-space: nowrap; font-size: 12px; }
.menu { color: #1a1a1a; }
.p2 { margin-left: 2px; }
.p4 { margin-left: 4px; }
.menu-ic { display: flex; align-items: center; gap: 3px; }
.m-change { margin-left: -2px; gap: 4px; }
.m-change .caret { margin-left: 5px; }
.ic-doc { width: 16px; height: 18px; }
.m-mon { margin-left: -7px; gap: 4px; }
.m-tab { width: 186px; height: 27px; margin-left: -3px; margin-top: 2px; background: #f8f8f8; color: #0a6a68; text-align: center; line-height: 27px; box-sizing: border-box; border-radius: 2px; font-size: 12px; }
.m-user { height: 27px; margin-left: -8px; margin-top: 2px; flex: 1; background: #f8f8f8; display: flex; align-items: center; padding-left: 4px; font-size: 12px; }
.u-num { margin-left: 4px; font-family: "Open Sans", sans-serif; font-size: 12px; width: 76px; }
.m-user .caret { margin-left: 6px; }
.u-bean { margin-left: 10px; }
.ic-bell { width: 13px; height: 16px; margin-left: 9px; }
.u-ch { margin-left: auto; margin-right: 3px; margin-bottom: 10px; }

.toolrow { height: 30px; flex: none; display: flex; gap: 3px; }
.tb-group { background: linear-gradient(#f6f6f6, #e9e9e9); height: 26px; display: flex; align-items: center; border-radius: 2px; }
.g1 { width: 150px; padding: 0 3px 0 6px; gap: 7px; box-sizing: border-box; position: relative; }
.ic-docn { width: 13px; height: 15px; }
.ic-open { width: 18px; height: 16px; }
.g1 .caret { margin-left: -2px; }
.ic-sv { width: 14px; height: 14px; margin-left: -1px; }
.tb-sep { width: 1px; height: 20px; background: #bbb; flex: none; }
.g1 .tb-sep { margin: 0 1px; }
.ic-un { width: 13px; height: 14px; }
.tb-more { margin-top: -10px; margin-left: auto; }
.g2 { flex: 1; padding-left: 4px; }
.tbi { display: flex; align-items: center; gap: 3px; white-space: nowrap; font-size: 12px; }
.tb-sum { margin-left: 12px; gap: 6px; }
.sigma { font: bold 14px "Liberation Sans", sans-serif; }
.ic-blue { width: 14px; height: 14px; margin-left: 19px; }
.g2-gap { width: 750px; flex: none; }
.dis { color: #909090; margin-right: 5px; }
.t-zoom { margin-right: 8px; }
.dis .caret { margin-left: 3px; }
.g2 .tb-sep { margin: 0 6px 0 -2px; }
.tb-more2 { margin-left: auto; margin-right: 3px; margin-bottom: 10px; }

.body { flex: 1; min-height: 0; display: flex; }

.nav { width: 165px; flex: none; display: flex; flex-direction: column; height: 620px; }
.nav-title { height: 13px; border: 1px solid #b5b5b5; background: #f3f3f3; display: flex; align-items: center; font-size: 13px; line-height: 13px; }
.nav-title span { flex: 1; }
.ic-pin { width: 10px; height: 12px; margin-right: 8px; }
.ic-x { width: 9px; height: 9px; margin-right: 4px; }
.nav-btn { height: 20px; border: 1px solid #b5b5b5; background: #f0f0f0; text-align: center; line-height: 22px; margin-top: 1px; font-size: 12px; flex: none; }
.nav-tree { flex: 1; min-height: 0; display: flex; flex-direction: column; border: 1px solid #c0c0c0; }
.nt-tools { height: 26px; display: flex; align-items: center; gap: 5px; padding-left: 6px; flex: none; background: #f6f6f6; }
.ic-pp { width: 17px; height: 15px; }
.ic-mm { width: 16px; height: 15px; }
.nt-body { flex: 1; min-height: 0; display: flex; background: #fff; border: 1px solid #9a9a9a; padding-top: 1px; }
.nt-list { flex: 1; min-width: 0; overflow: hidden; }
.nt-row { display: flex; align-items: center; height: 16px; white-space: nowrap; }
.chev { width: 10px; height: 10px; margin-left: 8px; }
.dash { display: block; flex: none; border-top: 1px dotted #666; height: 0; }
.d1 { width: 7px; }
.ic-fold { width: 16px; height: 14px; }
.nt-t { margin-left: 5px; font-size: 12px; }
.kids-o { margin-left: 13px; border-left: 1px dotted #666; }
.kids-o.last { border-left-color: transparent; }
.kids { margin-left: 19px; border-left: 1px dotted #666; }
.kid { height: 16px; display: flex; align-items: center; white-space: nowrap; }
.d2 { width: 8px; }
.kid-main { display: flex; align-items: center; gap: 4px; height: 16px; padding: 0 1px; }
.kid-main.sel { background: #d2d2d2; padding-right: 1px; }
.kid-t { font-size: 12px; }
.ic-cols { width: 13px; height: 13px; margin-left: 1px; }
.vs { width: 17px; display: flex; flex-direction: column; flex: none; background: #f0f0f0; margin-left: 2px; }
.vs-b { height: 17px; display: flex; align-items: center; justify-content: center; flex: none; }
.arr { width: 10px; height: 6px; }
.vs-track { flex: 1; padding-top: 26px; display: flex; }
.vs-thumb { flex: 1; background: #c8c8c8; }

.comp { width: 137px; margin-left: 6px; flex: none; display: flex; flex-direction: column; height: 621px; }
.comp-tools { height: 26px; margin-top: 2px; background: linear-gradient(#f9f9f9, #ededed); display: flex; align-items: center; padding-left: 4px; white-space: nowrap; overflow: hidden; font-size: 12px; flex: none; }
.ic-new { width: 18px; height: 16px; margin-right: 3px; }
.comp-tools .caret { margin-left: 4px; }
.ic-xb { width: 13px; height: 13px; margin-left: 7px; margin-right: 6px; }
.ic-cp { width: 12px; height: 14px; margin-left: 15px; margin-right: 1px; }
.comp-search { height: 22px; margin-top: 5px; border: 1px solid #777; background: #fff; color: #666; line-height: 19px; padding-left: 3px; font-size: 13px; box-sizing: border-box; flex: none; }
.comp-tree { flex: 1; min-height: 0; overflow: hidden; background: #fff; border: 1px solid #999; border-right: 0; margin-top: 2px; }
.ct-root { display: flex; align-items: center; height: 19px; }
.comp-tree .chev { margin-left: 6px; }
.d3 { width: 8px; }
.ic-sq { width: 14px; height: 14px; }
.ct-rt { margin-left: 5px; font-size: 12px; }
.ct-kids { margin-left: 31px; border-left: 1px dotted #666; }
.ct-row { height: 16px; display: flex; align-items: center; }
.d4 { width: 8px; }
.ct-item { display: flex; align-items: center; height: 16px; padding: 0 5px 0 4px; gap: 7px; }
.ct-item.sel { background: #3367b8; }
.ct-item.sel .mono { color: #0c1c3c; }
.ic-gear { width: 12px; height: 12px; }
.mono { font: 12px/16px "Liberation Mono", monospace; letter-spacing: -1.2px; color: #111; }

.doc { flex: 1; min-width: 0; display: flex; flex-direction: column; padding-left: 742px; height: 621px; }
.d-strip { height: 28px; background: #f7f7f7; flex: none; }
.d-white { height: 21px; background: #fff; flex: none; }
.d-inner { flex: 1; min-height: 0; display: flex; padding-right: 5px; background: #fff; }
.d-win { flex: 1; display: flex; flex-direction: column; background: #dbe6f2; border-top: 1px solid #555; min-width: 0; padding-right: 7px; }
.d-title { height: 29px; flex: none; background: linear-gradient(#bccde0, #dbe6f2); margin-right: -7px; }
.d-panel { flex: none; background: #f0f0f0; height: 534px; display: flex; flex-direction: column; }
.d-frame { margin-top: 20px; height: 486px; flex: none; margin-right: 3px; border: 1px solid #ddd; border-left: 0; box-sizing: border-box; display: flex; flex-direction: column; }
.d-row1 { height: 30px; margin-top: 3px; padding-left: 15px; background: linear-gradient(#fbfbfb, #efefef); display: flex; align-items: center; gap: 7px; flex: none; font-size: 12px; }
.d-row1 .tb-sep { margin: 0 -3px 0 0; }
.d-lev { margin-left: -3px; }
.d-more { margin-left: auto; margin-right: 4px; margin-bottom: 10px; }
.d-row2 { height: 26px; width: 104px; padding-left: 10px; background: #f8f8f8; display: flex; align-items: center; gap: 7px; flex: none; box-sizing: content-box; }
.dt { white-space: nowrap; }
.d-draw { height: 395px; flex: none; border: 2px solid #ff0000; border-left: 0; background: #141820; box-sizing: border-box; margin-top: 1px; overflow: hidden; }
.d-svg { display: block; }
.cad-t { font: 13px "Noto Sans CJK SC", sans-serif; }
.cad-s { font: 8px "Liberation Mono", monospace; }
.cad-g { font: 14px "Liberation Sans", sans-serif; letter-spacing: 1px; }
.d-foot { flex: 1; background: #f0f0f0; }
.d-foot .dt { display: block; padding: 6px 4px 0 9px; width: 13px; height: 20px; background: #f8f8f8; }
.d-status { height: 24px; margin-top: 3px; flex: none; background: #f5f5f5; display: flex; align-items: center; padding-left: 5px; position: relative; font-size: 12px; }
.grip { width: 11px; height: 11px; margin-left: auto; margin-right: 2px; margin-top: 8px; background: radial-gradient(circle, #b0b0b0 1px, transparent 1.300px) 0 0 / 4px 4px; flex: none; }
.d-scroll { width: 17px; margin-left: 1px; margin-top: 1px; display: flex; flex-direction: column; flex: none; border-left: 1px solid #ccc; background: #f0f0f0; }
.ds-b { height: 22px; flex: none; display: flex; align-items: center; justify-content: center; }
.ds-thumb { height: 384px; background: #c8c8c8; flex: none; }
.ds-track { flex: 1; }

.status { height: 21px; margin-top: 1px; flex: none; display: flex; background: #f0f0f0; gap: 2px; padding-top: 1px; box-sizing: border-box; white-space: nowrap; }
.st { display: block; box-sizing: border-box; border: 1px solid #d8d8d8; padding-left: 1px; line-height: 18px; height: 20px; font-size: 12px; }
.s0 { width: 148px; } .s1 { width: 78px; } .s2 { width: 98px; } .s3 { width: 48px; } .s4 { flex: 1; } .s5 { width: 70px; }

.taskbar { height: 40px; flex: none; display: flex; background: #06161f; color: #fff; align-items: stretch; }
.tk-start { width: 48px; background: #0a0a0a; display: flex; align-items: center; justify-content: center; flex: none; }
.ic-win { width: 16px; height: 16px; }
.tk-search { width: 344px; background: #f0f0f0; display: flex; align-items: center; flex: none; color: #333; }
.cortana { display: block; width: 15px; height: 15px; border: 3px solid #111; border-radius: 50%; margin-left: 10px; flex: none; }
.tk-q { margin-left: 9px; font-size: 13px; flex: 1; }
.ic-micd { width: 16px; height: 18px; margin-right: 12px; }
.tk-cell { display: flex; align-items: center; justify-content: center; flex: none; position: relative; }
.tk-cell.u::after { content: ""; position: absolute; left: 5px; right: 5px; bottom: 0; height: 2px; background: #76b9ed; }
.tk-cell.on { background-color: #37474f; }
.tk-cell.on::after { left: 0; right: 0; }
.tk-ic { width: 24px; height: 24px; }
.tk-view { width: 16px; height: 16px; }
.tk-fan, .tk-e { width: 22px; height: 26px; }
.tk-swirl { width: 28px; height: 24px; }
.tk-edge { width: 22px; height: 24px; }
.tk-folder { width: 22px; height: 22px; }
.tk-mail { width: 24px; height: 20px; }
.glodon { width: 23px; height: 24px; }
.tk-people { width: 16px; height: 18px; align-self: center; margin-left: 26px; }
.tk-cpu { width: 80px; margin-left: 15px; display: flex; flex-direction: column; align-items: center; justify-content: center; font-size: 12px; line-height: 17px; flex: none; }
.tk-tray { display: flex; align-items: center; margin-left: 2px; gap: 10px; flex: none; }
.tray { width: 14px; height: 16px; }
.tr-kbd { width: 23px; height: 16px; }
.tr-zh { font-size: 13px; margin-left: 3px; }
.tr-s { width: 13px; height: 17px; margin-left: 5px; }
.tk-clock { width: 72px; margin-left: 24px; display: flex; flex-direction: column; align-items: center; justify-content: center; font: 12px/20px "Open Sans", sans-serif; flex: none; }
.tk-notif { display: flex; align-items: center; margin-left: 1px; }

.editor { position: absolute; left: 308px; top: 58px; width: 751px; height: 647px; background: #f0f0f0; box-shadow: 0 0 10px rgba(0, 0, 0, .45); display: flex; flex-direction: column; }
.ed-title { height: 30px; flex: none; background: #fff; display: flex; align-items: center; padding-left: 8px; color: #a0a0a0; padding-top: 2px; box-sizing: border-box; }
.ed-close { width: 19px; height: 19px; margin-left: auto; margin-right: 2px; background: #e8e8e8; color: #fff; text-align: center; line-height: 18px; font-size: 12px; }
.ed-tb1 { height: 28px; flex: none; background: linear-gradient(#fff, #eee); display: flex; align-items: center; padding-left: 4px; white-space: nowrap; border-top: 1px solid #eee; box-sizing: border-box; }
.ed-grip { display: block; width: 2px; height: 14px; margin-right: 6px; background: repeating-linear-gradient(#aaa 0 2px, transparent 2px 4px); flex: none; }
.et { display: flex; align-items: center; gap: 5px; margin-right: 8px; color: #111; }
.et-first { gap: 4px; }
.et.off { color: #8a8a8a; gap: 4px; }
.et-tight { gap: 1px; margin-right: 7px; }
.et-sep { display: block; width: 1px; height: 17px; background: #bbb; margin: 0 5px 0 -1px; flex: none; }
.ic-xe { width: 13px; height: 13px; }
.ic-io { width: 18px; height: 16px; }
.ed-tb2 { height: 29px; flex: none; background: linear-gradient(#f9f9f9, #e9e9e9); display: flex; align-items: center; white-space: nowrap; }
.radio { display: block; width: 11px; height: 11px; border: 1px solid #777; border-radius: 50%; box-sizing: border-box; flex: none; background: #fff; }
.r1 { margin-left: 9px; } .r2 { margin-left: 18px; } .r3 { margin-left: 9px; }
.l1 { margin-left: 12px; } .l2 { margin-left: 10px; }
.rl.polar { margin-left: 7px; padding-right: 14px; background: #f0f0f0; line-height: 24px; }
.s2 { margin: 0 2px 0 0; height: 22px; }
.lab { font: 12px "Open Sans", sans-serif; color: #222; }
.mm { margin-left: 6px; }
.ylab { margin-left: 13px; }
.spin { width: 78px; height: 22px; margin-left: 10px; border: 1px solid #7a7a7a; background: #f0f0f0; box-sizing: border-box; display: flex; align-items: center; justify-content: flex-end; color: #888; font: 12px "Open Sans", sans-serif; }
.ylab + .spin { margin-left: 8px; }
.spin-a { display: flex; flex-direction: column; gap: 4px; margin-left: 7px; margin-right: 4px; }
.arr-s { width: 7px; height: 4px; }
.canvas { background: #000; flex: none; display: block; }
.cad-b { font: bold 17px "Liberation Serif", serif; }
.cad-grey { font: 12px "Liberation Mono", monospace; }
.mid { text-anchor: middle; }
.ed-dyn { flex: none; border-bottom: 1px solid #a0a0a0; padding: 2px; box-sizing: border-box; height: 28px; }
button { font: inherit; color: #111; padding: 0; cursor: default; }
.dyn-btn { width: 57px; height: 22px; border: 1px solid #0078d7; background: #e5f1fb; }
.ed-actions { height: 42px; flex: none; display: flex; justify-content: flex-end; align-items: flex-start; padding: 9px 13px 0 0; gap: 15px; box-sizing: border-box; }
.ebtn { height: 23px; background: #e1e1e1; border: 1px solid #adadad; box-sizing: border-box; }
.a2 { font-family: "Liberation Mono", monospace; letter-spacing: -1.2px; }
.w-a { width: 104px; margin-right: 9px; }
.w-b { width: 113px; margin-right: 10px; }
.w-c { width: 72px; }
.w-d { width: 72px; }
.ed-status { height: 20px; flex: none; display: flex; gap: 2px; align-items: center; position: relative; margin-top: 1px; }
.es { display: block; height: 20px; box-sizing: border-box; background: #fbfbfb; line-height: 20px; padding-left: 2px; white-space: nowrap; }
.es1 { width: 148px; }
.es1 .a { margin-left: 5px; }
.es2 { width: 147px; }
.es2 span + span { margin-left: 3px; }
.es3 { flex: 1; }
.ed-status .grip { position: absolute; right: 0; bottom: 1px; }

.dialog { position: absolute; left: 94px; top: 266px; width: 411px; height: 223px; box-sizing: border-box; border: 1px solid #3a9ae8; background: #efefef; box-shadow: 0 0 10px rgba(0, 0, 0, .4); display: flex; flex-direction: column; }
.dl-title { height: 25px; background: #fff; display: flex; align-items: center; padding-left: 4px; flex: none; font-size: 12px; }
.dl-x { width: 10px; height: 10px; margin-left: auto; margin-right: 9px; }
.dl-body { flex: 1; padding: 15px 13px 0; display: flex; flex-direction: column; gap: 8px; }
.fs { margin: 0; padding: 0 9px 6px 7px; border: 1px solid #dcdcdc; box-sizing: border-box; min-width: 0; }
.fs legend { padding: 0; margin-left: 0; line-height: 14px; height: 14px; font-size: 12px; white-space: nowrap; }
.ta { height: 41px; border: 1px solid #7a7a7a; background: #fff; box-sizing: border-box; padding: 2px 1px; line-height: 14px; margin-top: 2px; }
.ta.focus { border-color: #5a7a94; padding-top: 1px; }
.pick { background: #0078d7; color: #fff; }
.dl-actions { display: flex; justify-content: flex-end; gap: 15px; margin-top: 4px; margin-right: 1px; }

.ball { position: absolute; left: 717px; top: -38px; width: 48px; height: 48px; border-radius: 50%; background: #4caf50; box-shadow: 0 0 5px rgba(0, 0, 0, .4); color: #fff; font: bold 11px/12px "Liberation Sans", sans-serif; display: flex; align-items: flex-end; justify-content: center; padding-bottom: 0; }
.ball span { margin-bottom: -1px; }
.sogou { position: absolute; left: 682px; top: 8px; width: 204px; height: 23px; background: #f4f7fa; border: 1px solid #c4d4e0; box-sizing: border-box; display: flex; align-items: center; padding-left: 31px; color: #1a78c8; }
.sg-logo { position: absolute; left: 0; top: -4px; width: 26px; height: 27px; }
.sg-zh { font: bold 14px "Noto Sans CJK SC", sans-serif; width: 20px; }
.sg-pt { font: bold 13px "Liberation Sans", sans-serif; width: 26px; text-align: center; margin-right: 5px; }
.sg-ic { width: 16px; height: 16px; margin-right: 6px; }
.cursor { position: absolute; left: 51px; top: 640px; width: 12px; height: 16px; }
.tk-badge { position: absolute; left: 1332px; top: 749px; width: 16px; height: 16px; box-sizing: border-box; border: 1px solid #999; border-radius: 50%; background: #333; color: #fff; font: bold 10px/14px "Liberation Sans", sans-serif; text-align: center; }
.mark { position: absolute; box-sizing: border-box; border: 13px solid #ff0000; }
.m1 { left: 281px; top: 58px; width: 160px; height: 77px; }
.m2 { left: 76px; top: 216px; width: 115px; height: 84px; }
</style>
